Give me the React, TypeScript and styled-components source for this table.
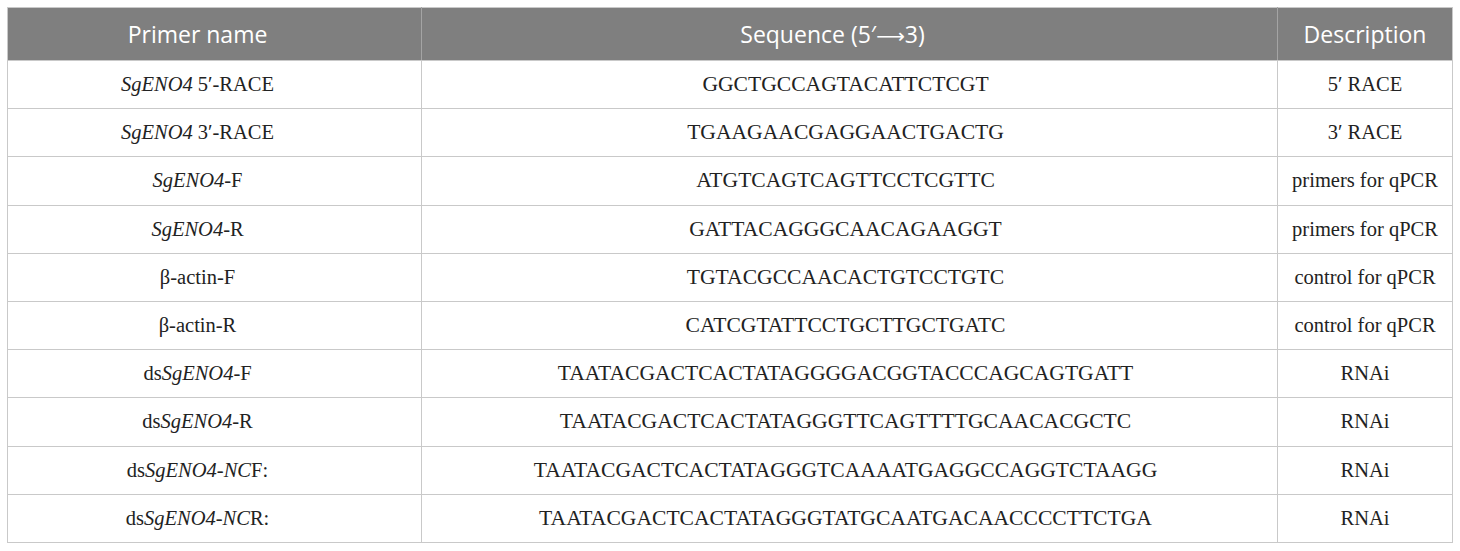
import React from "react";
import styled, { createGlobalStyle } from "styled-components";

const Global = createGlobalStyle`
  html, body { margin: 0; padding: 0; background: #ffffff; }
  body { font-family: "Liberation Serif", serif; }
`;

const Page = styled.div`
  padding: 7px 8px 0 7px;
`;

const Table = styled.table`
  width: 1445px;
  border-collapse: collapse;
  table-layout: fixed;
  border: 1px solid #c9c9c9;
`;

const HeadCell = styled.th<{ $w: number; $shift?: number }>`
  box-sizing: border-box;
  width: ${(p) => p.$w}px;
  height: 53px;
  padding: 0 ${(p) => 4 + (p.$shift ?? 0) * 2}px 0 4px;
  background: #7f7f7f;
  color: #ffffff;
  font-family: "Open Sans", "DejaVu Sans", sans-serif;
  font-weight: 400;
  font-size: 23px;
  text-align: center;
  vertical-align: middle;
  border-left: 1px solid #a4a4a4;
  border-right: 1px solid #a4a4a4;
  border-bottom: 1px solid #c9c9c9;
  &:first-child { border-left: 1px solid #c9c9c9; }
  &:last-child { border-right: 1px solid #c9c9c9; }
`;

const Arrow = styled.span`
  font-family: "DejaVu Sans", sans-serif;
  font-size: 20px;
`;

const Row = styled.tr`
  height: 48.2px;
`;

const Cell = styled.td<{ $seq?: boolean; $shift?: number }>`
  box-sizing: border-box;
  padding: 0 ${(p) => 4 + (p.$shift ?? 0) * 2}px 0 4px;
  border: 1px solid #c9c9c9;
  text-align: center;
  vertical-align: middle;
  font-family: "Liberation Serif", serif;
  font-size: ${(p) => (p.$seq ? "21.6px" : "20.5px")};
  color: #222222;
  white-space: nowrap;
`;

const I = styled.i`
  font-style: italic;
`;

type Rec = { name: React.ReactNode; seq: string; desc: string };

const rows: Rec[] = [
  { name: <><I>SgENO4</I> 5′-RACE</>, seq: "GGCTGCCAGTACATTCTCGT", desc: "5′ RACE" },
  { name: <><I>SgENO4</I> 3′-RACE</>, seq: "TGAAGAACGAGGAACTGACTG", desc: "3′ RACE" },
  { name: <><I>SgENO4</I>-F</>, seq: "ATGTCAGTCAGTTCCTCGTTC", desc: "primers for qPCR" },
  { name: <><I>SgENO4</I>-R</>, seq: "GATTACAGGGCAACAGAAGGT", desc: "primers for qPCR" },
  { name: <>β-actin-F</>, seq: "TGTACGCCAACACTGTCCTGTC", desc: "control for qPCR" },
  { name: <>β-actin-R</>, seq: "CATCGTATTCCTGCTTGCTGATC", desc: "control for qPCR" },
  { name: <>ds<I>SgENO4</I>-F</>, seq: "TAATACGACTCACTATAGGGGACGGTACCCAGCAGTGATT", desc: "RNAi" },
  { name: <>ds<I>SgENO4</I>-R</>, seq: "TAATACGACTCACTATAGGGTTCAGTTTTGCAACACGCTC", desc: "RNAi" },
  { name: <>ds<I>SgENO4-NC</I>F:</>, seq: "TAATACGACTCACTATAGGGTCAAAATGAGGCCAGGTCTAAGG", desc: "RNAi" },
  { name: <>ds<I>SgENO4-NC</I>R:</>, seq: "TAATACGACTCACTATAGGGTATGCAATGACAACCCCTTCTGA", desc: "RNAi" },
];

export default function App() {
  return (
    <>
      <Global />
      <Page>
        <Table>
          <thead>
            <tr>
              <HeadCell $w={414} $shift={17}>Primer name</HeadCell>
              <HeadCell $w={856} $shift={17}>
                Sequence (5′<Arrow>⟶</Arrow>3)
              </HeadCell>
              <HeadCell $w={175}>Description</HeadCell>
            </tr>
          </thead>
          <tbody>
            {rows.map((r, i) => (
              <Row key={i}>
                <Cell $shift={17}>{r.name}</Cell>
                <Cell $seq $shift={4}>{r.seq}</Cell>
                <Cell>{r.desc}</Cell>
              </Row>
            ))}
          </tbody>
        </Table>
      </Page>
    </>
  );
}
